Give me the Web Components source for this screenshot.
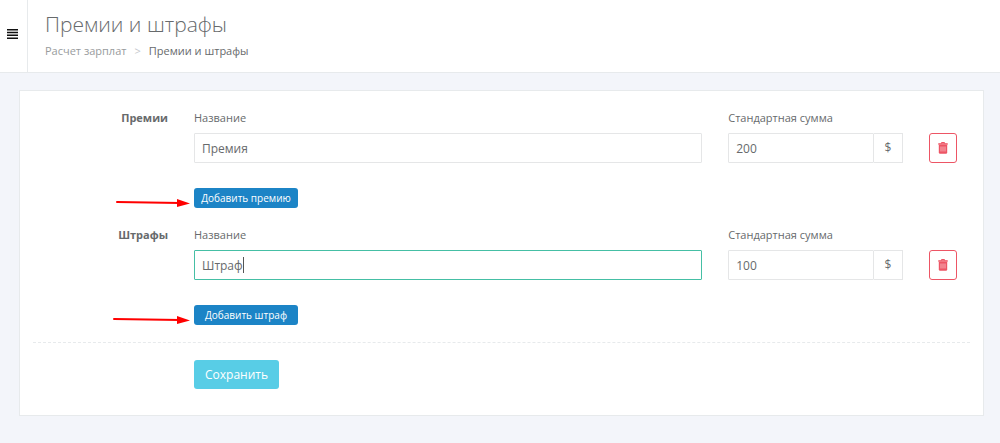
<!DOCTYPE html>
<html lang="ru">
<head>
<meta charset="utf-8">
<meta name="viewport" content="width=device-width, initial-scale=1">
<title>Премии и штрафы</title>
<style>
  body {
    margin: 0;
    background: #f3f5fa;
    color: #676a6c;
    font-family: "Open Sans", "Noto Sans", sans-serif;
    font-size: 11px;
    line-height: 18px;
  }
</style>
</head>
<body>
<page-header heading="Премии и штрафы">
  <a slot="parent" href="#">Расчет зарплат</a>
  <span slot="current">Премии и штрафы</span>
</page-header>

<form-panel>
  <pay-group label="Премии" name="Премия" sum="200" add="Добавить премию"></pay-group>
  <pay-group label="Штрафы" name="Штраф" sum="100" add="Добавить штраф" active></pay-group>
  <save-button slot="actions">Сохранить</save-button>
</form-panel>

<script>
class PageHeader extends HTMLElement {
  connectedCallback() {
    this.attachShadow({ mode: 'open' });
    this.shadowRoot.innerHTML = `
      <style>
        :host {
          display: block;
        }
        header {
          display: flex;
          background: #fff;
          border-bottom: 1px solid #e7eaec;
        }
        button {
          display: flex;
          align-items: center;
          justify-content: center;
          width: 28px;
          padding: 0 3px 5px 0;
          border: 0;
          border-right: 1px solid #e7eaec;
          background: none;
          color: #111;
          box-sizing: border-box;
        }
        .titles {
          padding: 8px 17px 12px;
        }
        h1 {
          margin: 0 0 2px;
          font-size: 21px;
          line-height: 32px;
          font-weight: 300;
        }
        nav {
          display: flex;
          gap: 8px;
        }
        ::slotted(a) {
          color: #989b9d;
          text-decoration: none;
        }
        .sep {
          color: #c4c8cc;
        }
      </style>
      <header>
        <button type="button" aria-label="Меню">
          <svg width="11" height="10" viewBox="0 0 11 10" fill="currentColor">
            <path d="M0 0h11v1.5H0zM0 2.8h11v1.5H0zM0 5.6h11v1.5H0zM0 8.4h11v1.5H0z"/>
          </svg>
        </button>
        <div class="titles">
          <h1>${this.getAttribute('heading')}</h1>
          <nav>
            <slot name="parent"></slot>
            <span class="sep">&gt;</span>
            <slot name="current"></slot>
          </nav>
        </div>
      </header>
    `;
  }
}

class FormPanel extends HTMLElement {
  connectedCallback() {
    this.attachShadow({ mode: 'open' });
    this.shadowRoot.innerHTML = `
      <style>
        :host {
          display: block;
          margin: 17px 16px 27px 19px;
          padding: 18px 13px 26px;
          background: #fff;
          border: 1px solid #e7eaec;
        }
        .actions {
          padding: 17px 0 0 161px;
          border-top: 1px dashed #e7eaec;
        }
      </style>
      <slot></slot>
      <div class="actions"><slot name="actions"></slot></div>
    `;
  }
}

class PayGroup extends HTMLElement {
  connectedCallback() {
    const active = this.hasAttribute('active');
    this.attachShadow({ mode: 'open' });
    this.shadowRoot.innerHTML = `
      <style>
        :host {
          display: block;
        }
        .row {
          display: grid;
          grid-template-columns: 135px minmax(0, 509fr) minmax(0, 175fr) 41px;
          column-gap: 26px;
          align-items: start;
        }
        .group-label {
          text-align: right;
          font-weight: 700;
        }
        label {
          display: block;
          margin-bottom: 6px;
        }
        .control {
          position: relative;
          display: flex;
        }
        input {
          flex: 1;
          min-width: 0;
          height: 30px;
          padding: 0 7px;
          border: 1px solid #e5e6e7;
          border-radius: 1px;
          background: #fff;
          color: #676a6c;
          font: inherit;
          font-size: 12px;
          box-sizing: border-box;
          outline: none;
        }
        :host([active]) .name input {
          border-color: #45bfa5;
        }
        .caret {
          position: absolute;
          left: 49px;
          top: 7px;
          width: 1px;
          height: 16px;
          background: #555;
        }
        .unit {
          width: 29px;
          border: 1px solid #e5e6e7;
          border-left: 0;
          font-size: 12px;
          line-height: 28px;
          text-align: center;
          box-sizing: border-box;
        }
        .remove {
          display: flex;
          align-items: center;
          justify-content: center;
          width: 28px;
          height: 30px;
          margin-top: 24px;
          padding: 0;
          border: 1px solid #ed5565;
          border-radius: 3px;
          background: #fff;
          color: #ed5565;
        }
        .add-row {
          display: flex;
          padding: 25px 0 18px 161px;
        }
        :host([active]) .add-row {
          padding-bottom: 17px;
        }
        .add-wrap {
          position: relative;
        }
        .add {
          display: block;
          width: 104px;
          height: 20px;
          padding: 0;
          border: 0;
          border-radius: 3px;
          background: #1c84c6;
          color: #fff;
          font: inherit;
          font-size: 10px;
          white-space: nowrap;
        }
        .arrow {
          position: absolute;
          right: calc(100% + 4px);
          top: 10px;
        }
      </style>
      <div class="row">
        <div class="group-label">${this.getAttribute('label')}</div>
        <div class="name">
          <label for="name">Название</label>
          <div class="control">
            <input id="name" type="text" value="${this.getAttribute('name')}">
            ${active ? '<span class="caret"></span>' : ''}
          </div>
        </div>
        <div>
          <label for="sum">Стандартная сумма</label>
          <div class="control">
            <input id="sum" type="text" value="${this.getAttribute('sum')}">
            <span class="unit">$</span>
          </div>
        </div>
        <button class="remove" type="button" aria-label="Удалить">
          <svg width="10" height="12" viewBox="0 0 10 12" fill="none" stroke="currentColor">
            <path d="M3.5 1.5v-1h3v1"/>
            <path d="M0.3 2h9.4" stroke-width="1.6"/>
            <path d="M.8 3h8.4v7.2q0 1.500-1.300 1.500H2.100Q.8 11.700 .8 10.200z" fill="currentColor" stroke="none"/>
            <path d="M3 4.500v5M5 4.500v5M7 4.500v5" stroke="#fff" stroke-width=".7" opacity=".8"/>
          </svg>
        </button>
      </div>
      <div class="add-row">
        <div class="add-wrap">
          <button class="add" type="button">${this.getAttribute('add')}</button>
          <svg class="arrow" width="77" height="10" viewBox="0 0 77 10">
            <path d="M${active ? 1 : 4} 4L67 5" stroke="#f00" stroke-width="2" stroke-linecap="round"/>
            <path d="M64 1L77 5.500L64 9z" fill="#f00"/>
          </svg>
        </div>
      </div>
    `;
  }
}

class SaveButton extends HTMLElement {
  connectedCallback() {
    this.attachShadow({ mode: 'open' });
    this.shadowRoot.innerHTML = `
      <style>
        :host {
          display: block;
        }
        button {
          height: 29px;
          padding: 0 11px;
          border: 0;
          border-radius: 3px;
          background: #58cde6;
          color: #fff;
          font: inherit;
          font-size: 12px;
          display: block;
        }
      </style>
      <button type="submit"><slot></slot></button>
    `;
  }
}

customElements.define('page-header', PageHeader);
customElements.define('form-panel', FormPanel);
customElements.define('pay-group', PayGroup);
customElements.define('save-button', SaveButton);
</script>
</body>
</html>
